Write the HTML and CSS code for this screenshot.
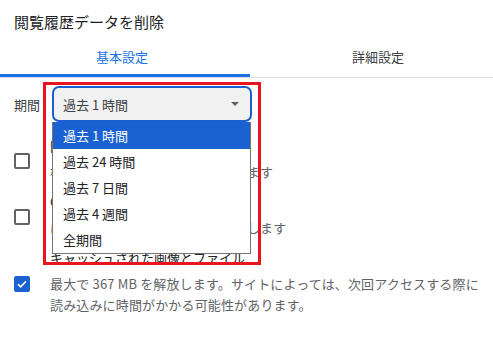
FILE: index.html
```html
<!DOCTYPE html>
<html lang="ja">
<head>
<meta charset="utf-8">
<link rel="stylesheet" href="styles.css">
</head>
<body>
<div class="page">
  <div class="title">閲覧履歴データを削除</div>
  <div class="tabs">
    <div class="tab tab-active">基本設定</div>
    <div class="tab tab-idle">詳細設定</div>
  </div>
  <div class="period">
    <span class="period-label">期間</span>
    <div class="select">
      <span class="select-value">過去 1 時間</span>
      <svg class="select-arrow" width="8" height="4" viewBox="0 0 8 4"><path d="M0 0h8L4 4z" fill="#5f6368"/></svg>
    </div>
  </div>
  <div class="items">
    <div class="item">
      <span class="box"></span>
      <div class="item-text">
        <div class="item-title">閲覧履歴</div>
        <div class="item-desc">検索ボックスを含む履歴を削除します</div>
      </div>
    </div>
    <div class="item">
      <span class="box"></span>
      <div class="item-text">
        <div class="item-title">Cookie と他のサイトデータ</div>
        <div class="item-desc">ほとんどのサイトからログアウトします</div>
      </div>
    </div>
    <div class="item">
      <span class="box box-checked">
        <svg width="10" height="8" viewBox="0 0 10 8"><path d="M1 4.2l2.7 2.6L9 1.2" fill="none" stroke="#fff" stroke-width="1.6"/></svg>
      </span>
      <div class="item-text">
        <div class="item-title">キャッシュされた画像とファイル</div>
        <div class="item-desc">最大で 367 MB を解放します。サイトによっては、次回アクセスする際に読み込みに時間がかかる可能性があります。</div>
      </div>
    </div>
  </div>

  <ul class="dropdown">
    <li class="opt opt-selected">過去 1 時間</li>
    <li class="opt">過去 24 時間</li>
    <li class="opt">過去 7 日間</li>
    <li class="opt">過去 4 週間</li>
    <li class="opt">全期間</li>
  </ul>
  <div class="highlight"></div>
</div>
</body>
</html>
```

FILE: styles.css
```css
* { box-sizing: border-box; }
html, body { margin: 0; padding: 0; background: #fff; }
body {
  font-family: "Noto Sans CJK JP", "Noto Sans", sans-serif;
  font-size: 13px;
  color: #202124;
  width: 493px;
  height: 342px;
  overflow: hidden;
}
.page { position: relative; width: 493px; height: 342px; overflow: hidden; }

.title {
  font-size: 15px;
  line-height: 20px;
  padding: 12px 0 0 14px;
  height: 40px;
  color: #202124;
}

.tabs {
  display: flex;
  height: 38px;
  border-bottom: 1px solid #dadce0;
}
.tab {
  flex: none;
  display: flex;
  align-items: center;
  justify-content: center;
  padding-bottom: 4px;
  font-size: 13px;
}
.tab-active {
  width: 250px;
  padding-right: 6px;
  color: #1a73e8;
  box-shadow: inset 0 -3px 0 #1a73e8;
}
.tab-idle { width: 256px; color: #3c4043; }

.period {
  display: flex;
  align-items: center;
  gap: 12px;
  padding: 8px 0 0 14px;
}
.period-label { width: 26px; color: #3c4043; }
.select {
  width: 200px;
  height: 36px;
  border: 2px solid #1a5fd0;
  border-radius: 7px;
  background: #f1f1f1;
  display: flex;
  align-items: center;
  justify-content: space-between;
  padding: 0 11px 0 9px;
  color: #3c4043;
}

.items {
  display: flex;
  flex-direction: column;
  gap: 10px;
  padding: 14px 10px 0 14px;
}
.item {
  display: flex;
  align-items: center;
  gap: 20px;
}
.box {
  flex: none;
  width: 16px;
  height: 16px;
  border: 2px solid #5f6368;
  border-radius: 2px;
  margin-top: 4px;
  display: flex;
  align-items: center;
  justify-content: center;
}
.box-checked { background: #1a62d2; border-color: #1a62d2; }
.item-text { flex: 1; }
.item-title { line-height: 20px; color: #202124; }
.item-desc { margin-top: 5px; line-height: 21px; color: #5f6368; letter-spacing: 0.15px; }

.dropdown {
  position: absolute;
  left: 52px;
  top: 122px;
  width: 199px;
  margin: 0;
  padding: 0;
  list-style: none;
  background: #fff;
  border: 1px solid #767676;
  border-top: none;
}
.opt {
  height: 26px;
  line-height: 26px;
  padding-left: 10px;
  color: #202124;
}
.opt:first-child { height: 27px; line-height: 27px; }
.opt-selected { background: #1a62d2; color: #fff; }

.highlight {
  position: absolute;
  left: 43px;
  top: 82px;
  width: 218px;
  height: 183px;
  border: 3px solid #e8141e;
}
```
